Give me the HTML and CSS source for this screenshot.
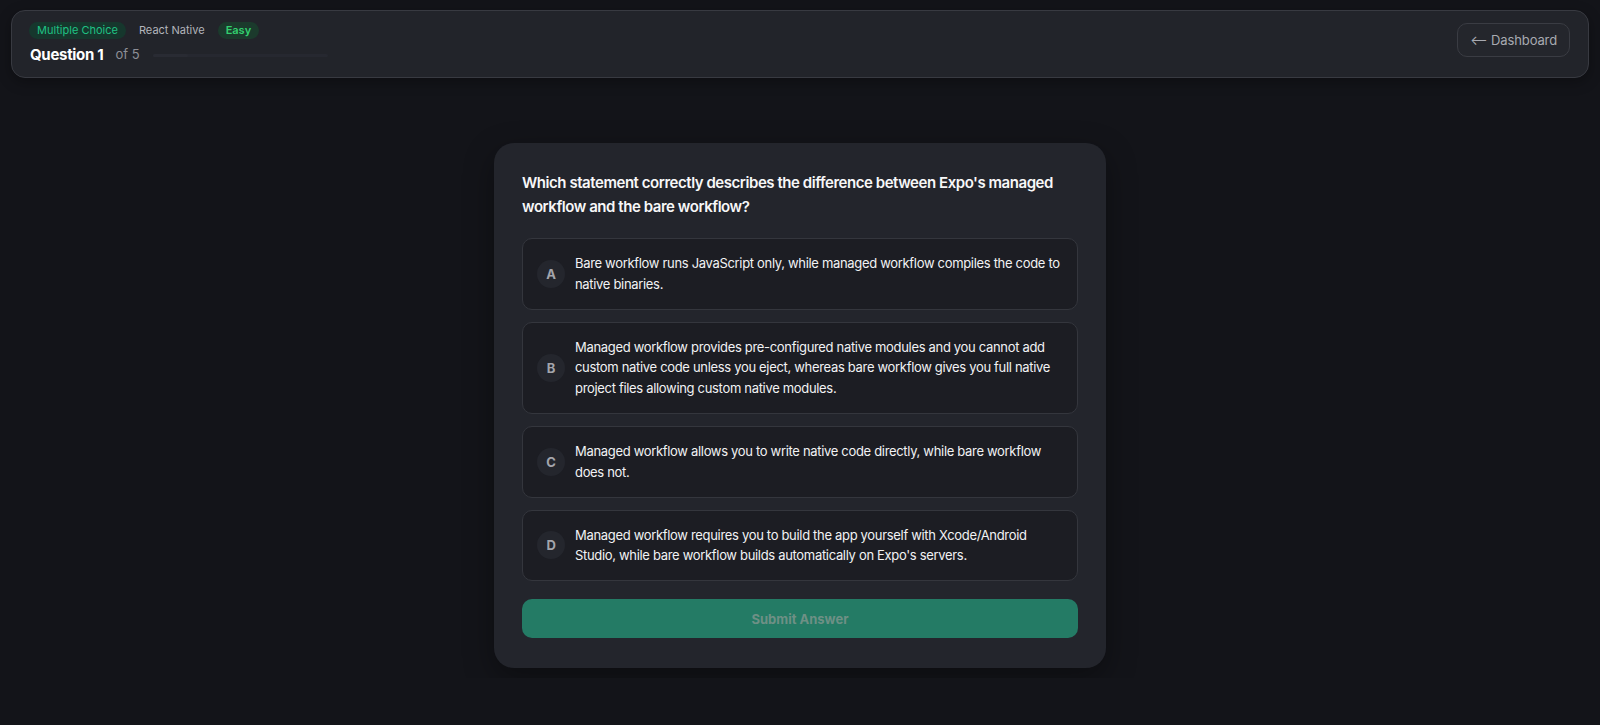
FILE: index.html
```html
<!DOCTYPE html>
<html lang="en">
<head>
    <meta charset="UTF-8">
    <meta name="viewport" content="width=device-width, initial-scale=1.0">
    <title>Quiz - Question 1</title>
    <link rel="stylesheet" href="styles.css">
</head>
<body>
    <header class="quiz-header">
        <div class="header-info">
            <div class="tags">
                <span class="tag tag-type">Multiple Choice</span>
                <span class="tag tag-topic">React Native</span>
                <span class="tag tag-easy">Easy</span>
            </div>
            <div class="progress-row">
                <span class="question-label">Question 1</span>
                <span class="question-total">of 5</span>
                <div class="progress-track"><div class="progress-fill" style="width: 20%"></div></div>
            </div>
        </div>
        <button class="back-btn">&#x27F5; Dashboard</button>
    </header>

    <main class="quiz-main">
        <div class="question-card">
            <h2 class="question-text">Which statement correctly describes the difference between Expo's managed workflow and the bare workflow?</h2>

            <div class="options">
                <div class="option">
                    <span class="option-letter">A</span>
                    <span class="option-text">Bare workflow runs JavaScript only, while managed workflow compiles the code to native binaries.</span>
                </div>
                <div class="option">
                    <span class="option-letter">B</span>
                    <span class="option-text">Managed workflow provides pre-configured native modules and you cannot add custom native code unless you eject, whereas bare workflow gives you full native project files allowing custom native modules.</span>
                </div>
                <div class="option">
                    <span class="option-letter">C</span>
                    <span class="option-text">Managed workflow allows you to write native code directly, while bare workflow does not.</span>
                </div>
                <div class="option">
                    <span class="option-letter">D</span>
                    <span class="option-text">Managed workflow requires you to build the app yourself with Xcode/Android Studio, while bare workflow builds automatically on Expo's servers.</span>
                </div>
            </div>

            <button class="submit-btn" disabled>Submit Answer</button>
        </div>
    </main>
</body>
</html>
```

FILE: styles.css
```css
body {
    font-family: Inter, 'Noto Sans', sans-serif;
    margin: 0;
    padding: 10px 11px;
    background-color: #131419;
    color: #f2f3f5;
    letter-spacing: -0.02em;
}

.quiz-header {
    display: flex;
    justify-content: space-between;
    align-items: flex-start;
    background-color: #22242a;
    border: 1px solid #383a41;
    border-radius: 14px;
    padding: 11px 18px 13px 17px;
    box-shadow: 0 4px 14px rgba(0,0,0,0.3);
}

.tags {
    display: flex;
    align-items: center;
    gap: 8px;
    letter-spacing: 0;
}

.tag {
    font-size: 11px;
    line-height: 17px;
    padding: 0 8px;
    border-radius: 9px;
}

.tag-type {
    background-color: #16372d;
    color: #1fc184;
}

.tag-topic {
    color: #b3b5bb;
    padding: 0 5px;
}

.tag-easy {
    background-color: #1b3a2c;
    color: #33cf6f;
    font-weight: 600;
}

.progress-row {
    display: flex;
    align-items: center;
    margin-top: 5px;
    height: 20px;
}

.question-label {
    font-size: 15px;
    font-weight: 700;
    color: #ffffff;
    margin-left: 1px;
    letter-spacing: -0.02em;
}

.question-total {
    font-size: 13px;
    color: #8d8f96;
    margin-left: 12px;
    letter-spacing: 0;
}

.progress-track {
    width: 175px;
    height: 3px;
    margin-left: 13px;
    margin-top: 2px;
    background-color: #262830;
    border-radius: 2px;
}

.progress-fill {
    height: 100%;
    background-color: #292b33;
    border-radius: 2px;
}

.back-btn {
    font-family: inherit;
    font-size: 13px;
    letter-spacing: -0.01em;
    color: #a8aab1;
    background-color: #24262c;
    border: 1px solid #3a3c43;
    border-radius: 10px;
    height: 34px;
    padding: 0 12px;
    margin-top: 1px;
    cursor: pointer;
}

.quiz-main {
    display: flex;
    justify-content: center;
    padding-top: 65px;
}

.question-card {
    width: 556px;
    background-color: #23252c;
    border-radius: 20px;
    padding: 28px 28px 30px;
    box-shadow: 0 10px 30px rgba(0,0,0,0.35);
}

.question-text {
    font-size: 15px;
    font-weight: 600;
    line-height: 23.5px;
    letter-spacing: -0.03em;
    margin: 0 0 20px;
    color: #f7f7f8;
}

.options {
    display: flex;
    flex-direction: column;
    gap: 12px;
}

.option {
    display: flex;
    align-items: center;
    gap: 10px;
    background-color: #1c1d23;
    border: 1px solid #34363d;
    border-radius: 10px;
    padding: 14px 16px 14px 14px;
    cursor: pointer;
}

.option-letter {
    flex-shrink: 0;
    width: 28px;
    height: 28px;
    border-radius: 50%;
    background-color: #24262d;
    color: #a3a5ac;
    font-size: 13px;
    font-weight: 700;
    display: flex;
    align-items: center;
    justify-content: center;
}

.option-text {
    font-size: 13px;
    line-height: 20.8px;
    color: #f1f2f4;
}

.submit-btn {
    display: block;
    width: 100%;
    margin-top: 18px;
    height: 39px;
    border: none;
    border-radius: 10px;
    background-color: #247b65;
    color: #6e9085;
    font-family: inherit;
    font-size: 13px;
    font-weight: 700;
}
```
